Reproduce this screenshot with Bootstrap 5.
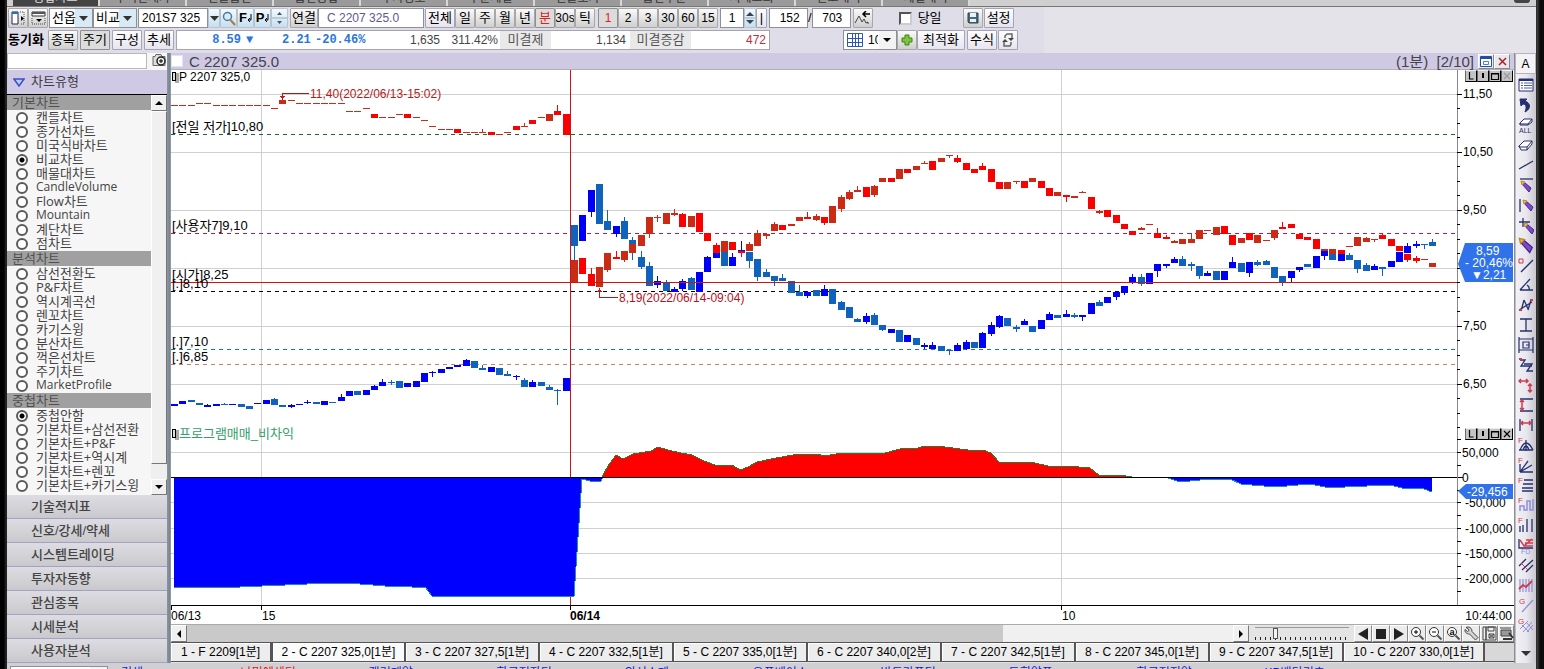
<!DOCTYPE html>
<html lang="ko">
<head>
<meta charset="utf-8">
<meta name="viewport" content="width=device-width, initial-scale=1">
<title>C 2207 325.0 차트</title>
<link rel="stylesheet" href="https://cdn.jsdelivr.net/npm/bootstrap@5.3.0/dist/css/bootstrap.min.css">
<style>
:root{--ui:"Liberation Sans","Noto Sans CJK KR",sans-serif;--lav:#cfc9e4;--line:#a9a9b2}
body{font-family:var(--ui);font-size:13px;line-height:14px;color:#000;background:#151515;overflow-x:hidden}
button,input,select{font-family:inherit}
.frame{padding:0 8px 0 7px;background:linear-gradient(90deg,#000 4px,#2a2a2a 6px,#1a1a1a 7px,#1a1a1a calc(100% - 8px),#444 calc(100% - 7px),#0c0c0c calc(100% - 4px))}
.desk{background:#e1e0e8;min-width:0}
/* window tabs */
.wintabs{height:7px;overflow:hidden;background:#cfcfcf;border-bottom:1px solid #77776f;padding-left:6px}
.wintabs a{width:87px;height:6px;border-right:2px solid #d8d8d8;background:#9a9a9a;color:#333;font-size:12px;line-height:12px;padding-bottom:2px;text-decoration:none;align-items:flex-end;justify-content:center;overflow:hidden}
.wintabs a.on{background:#444;color:#ddd}
.pill{width:16px;height:3px;background:#444;border-radius:0 0 3px 3px;margin-right:6px}
/* toolbar */
.tools{background:linear-gradient(90deg,#dfdee8 1036px,#e4e3ea 1038px);height:46px;padding:1px 1px 2px}
.trow{height:20px;margin-bottom:2px}
.tb{padding:0;height:20px;font-size:13px;line-height:18px;border:1px solid #a5a4b4;border-radius:1px;background:linear-gradient(#fdfdfe,#e6e5ef);color:#000;overflow:hidden;display:flex;align-items:center;justify-content:center;flex:none;white-space:nowrap}
.tb.num{font-size:12px}
.tb.gray{background:linear-gradient(#fafafa,#cfcfcf);border-color:#a8a8a8}
.tb.pressed{background:#dcdcdc;border-color:#8f8f8f}
.tb.blue{background:linear-gradient(#f4f9fd,#c6dff0);border-color:#b4c4d2}
.tb.hot{color:#e02020}
.w11{width:11px}.w12{width:12px}.w17{width:17px}.w20{width:20px}.w28{width:28px}.w30{width:30px}.w48{width:48px}
.fld{height:20px;padding:0 3px;font-size:12px;line-height:18px;border:1px solid #8f8f98;border-radius:0;background-color:#fff;color:#000;flex:none}
.fld:focus{box-shadow:none}
.sel{padding:0 0 0 2px;font-size:13px;background-position:right 0 center;background-size:17px 18px;background-image:url("data:image/svg+xml,%3Csvg xmlns='http://www.w3.org/2000/svg' viewBox='0 0 17 18'%3E%3Cpath fill='%23d8eaf6' d='M0 0h17v18H0z'/%3E%3Cpath fill='%23333' d='M4 7h9l-4.500 5z'/%3E%3C/svg%3E")}
.sel.plain{background-image:url("data:image/svg+xml,%3Csvg xmlns='http://www.w3.org/2000/svg' viewBox='0 0 17 18'%3E%3Cpath fill='%23f3f3f3' d='M0 0h17v18H0z'/%3E%3Cpath fill='%23000' d='M4 7h8l-4 4z'/%3E%3C/svg%3E")}
.sel.grid-sel{width:54px;padding:0 18px 0 24px;text-overflow:clip;font-size:12px}
.c44{width:44px}.c70{width:70px}.c106{width:106px}.c24{width:24px}.c39{width:39px}
.gp{gap:2px}
.sync{width:40px;font-weight:700;font-size:13px;line-height:20px;white-space:nowrap}
.quote{height:20px;width:594px;border:1px solid #a5a5ad;background:#fff;color:#444;font-size:12px;line-height:18px;margin-left:2px;flex:none}
.quote b{color:#2a76dd;font-family:"Liberation Mono",monospace;font-size:12px;white-space:pre}
.quote .lbl{background:#e9e9e9;color:#555;font-size:13px;text-align:center}
.form-check-input.box13[type=checkbox]{width:13px;height:13px;margin:0;border:2px solid #666;border-color:#555 #ccc #ccc #555;border-radius:0;background-color:#fff;flex:none}
/* side column */
.side{width:160px;flex:none;background:#f6f6f6}
.search{height:17px}
.search .fld{height:16px;width:140px;border-color:#b8b8b8}
.bar{height:24px;background:var(--lav);color:#3c3c44;font-size:13px;line-height:24px;padding:0 0 0 6px;border:0;text-align:left;width:100%}
.listbox{height:401px;border-top:1px solid #000;overflow:hidden}
.grp{height:15px;background:#a0a0a0;color:#505050;font-size:13px;line-height:15px;padding-left:5px;margin:0;width:100%}
.opts{margin:0;padding:0 0 1px;border:0;font-family:"Open Sans","Noto Sans CJK KR",sans-serif}
.opt{height:14px;padding-left:9px;color:#444;font-size:13px;line-height:14px;gap:8px;white-space:nowrap}
.opt.latin{font-size:12px}
.opt input{width:12px;height:12px;margin:2px 0 0;border:2px solid #5a5a5a;background:#fff;flex:none}
.opt input:checked{background:radial-gradient(circle,#000 2px,#fff 3px);border-color:#5a5a5a}
.vsb{width:16px;flex:none;background:#efefef}
.cap{width:16px;height:16px;padding:0;border:1px solid;border-color:#fff #777 #777 #fff;background:#f0f0f0;display:flex;align-items:center;justify-content:center;flex:none;border-radius:0}
.vthumb{height:353px;border:1px solid;border-color:#fff #777 #777 #fff;background:#f0f0f0}
.acc .list-group-item{height:24px;padding:0 0 0 24px;border:0;border-bottom:1px solid #a3a1c4;border-radius:0;background:linear-gradient(#dcdce2,#c9c9cd);color:#444;font-size:13px;line-height:22px;font-weight:500;text-align:left}
.gut{width:4px;flex:none;background:linear-gradient(90deg,#8b969f,#76838f 75%,#aab2b8)}
/* chart window */
.cap-title{height:17px;background:var(--lav);border-bottom:1px solid #b0aeb8;color:#44434c;font-size:15px;line-height:17px}
.cap-title .form-check-input[type=checkbox]{width:12px;height:12px;border:1px solid #e4e4ec;border-radius:0;margin:0 6px 0 0}
.wb{width:16px;height:15px;padding:0;border:1px solid;border-color:#fff #888 #888 #fff;background:#e9e8ee;display:flex;align-items:center;justify-content:center}
.canvas{position:relative;height:554px;background:#fff}
.canvas svg.plot{display:block;width:100%;height:554px}
.plot text{font-family:var(--ui);font-size:12px}
.plot text.ko{font-size:13px}
.mini{position:absolute;right:1px;z-index:2}
.mini button{width:12px;height:12px;padding:0;border:1px solid;border-color:#eee #000 #000 #666;background:#c4c4c4;display:flex}
.m1{top:0}.m2{top:358px}
.hsb{height:18px;background:#e4e4e4;border-top:1px solid #aaa}
.hthumb{background:#c9c9c9;width:78%}
.htrack{background:#f0f0f0}
.hsb .cap{height:17px}
.range{width:94px;height:16px;appearance:none;background:linear-gradient(#999,#999) 0 2px/100% 1px no-repeat,repeating-linear-gradient(90deg,#222 0 1px,transparent 1px 5px) 0 12px/100% 3px no-repeat;margin:0 5px 0 6px}
.range::-webkit-slider-thumb{appearance:none;width:5px;height:11px;background:#f4f4f4;border:1px solid #555}
.hb{width:18px;height:17px;padding:0;border:1px solid;border-color:#fff #888 #888 #fff;background:#ececec;display:flex;align-items:center;justify-content:center;flex:none;border-radius:0}
.sheets{height:20px;background:#d8d8d8;border-top:1px solid #555;border-bottom:1px solid #555;flex-wrap:nowrap;overflow:hidden}
.sheets .nav-link{width:134px;height:18px;padding:0;border:0;border-right:2px solid #555;border-radius:0;background:#ededed;color:#000;font-size:12px;line-height:18px;text-align:center;flex:none;white-space:nowrap;box-shadow:inset 1px 1px #fff}
.sheets .nav-link.first{width:101px}
.sheets .nav-link.last{width:141px}
.sheets .nav-link.active{background:#fafafa;border-left:1px solid #555}
/* drawing tools */
.draw{width:22px;flex:none;background:linear-gradient(90deg,#8d8d93 1px,#f1f0f4 2px,#e9e8ee 12px,#c9c6ce);padding-left:1px}
.draw button{width:21px;height:20px;padding:0;border:0;background:none;display:flex;align-items:center;justify-content:center}
.draw .abtn{height:21px;background:#f3f2f5;border:1px solid #b5b5bb;font-size:12px;color:#000;margin-bottom:1px}
.ticker{height:7px;overflow:hidden;background:#d0d0d3;font-size:12px;line-height:12px;padding-left:3px}
.ticker select{width:98px;height:20px;margin-top:3px;padding:0 0 0 10px;line-height:12px;align-self:flex-start}
.ticker a{width:128px;flex:none;padding-top:4px;text-decoration:none;color:#1414d8;line-height:12px;white-space:nowrap}
.ticker a.up{color:#e01414}
.ticker a.key{width:125px;padding-left:13px}
svg{flex:none}
</style>
</head>
<body>
<div class="frame">
<div class="desk">
  <nav class="wintabs d-flex" id="wintabs"></nav>

  <div class="tools">
    <div class="trow d-flex align-items-center">
      <button class="btn tb gray w20" aria-label="왼쪽 패널"><svg width="15" height="14"><path d="M1 1h6v12H1z" fill="#fff" stroke="#225"/><path d="M1 2h6" stroke="#2a6fb0" stroke-width="2"/><path d="M9 1h4v12H9" fill="none" stroke="#444" stroke-dasharray="1 1"/><path d="M10 5l3 2.500-3 2.500z"/></svg></button>
      <button class="btn tb gray w20" aria-label="위쪽 패널"><svg width="15" height="14"><path d="M1 1h13v4H1z" fill="#fff" stroke="#333"/><path d="M1 2h13" stroke="#555" stroke-width="2"/><path d="M1 7v6h13V7" fill="none" stroke="#444" stroke-dasharray="1 1"/><path d="M5 8h6l-3 3z"/></svg></button>
      <select class="form-select fld sel c44" style="margin-left:1px" aria-label="종목군"><option>선옵</option></select>
      <select class="form-select fld sel c44" aria-label="방식"><option>비교</option></select>
      <input class="form-control fld c70" style="margin-left:1px" value="201S7 325" aria-label="종목코드">
      <button class="btn tb blue w12" aria-label="목록"><svg width="9" height="5"><path d="M0 0h9L4.500 5z" fill="#333"/></svg></button>
      <button class="btn tb blue w17" aria-label="찾기"><svg width="14" height="15"><circle cx="5.500" cy="5.500" r="4" fill="#d4ecfa" stroke="#4c7a98" stroke-width="1.500"/><path d="M8.500 9l4.500 5" stroke="#b07a38" stroke-width="2"/></svg></button>
      <button class="btn tb blue w17"><b>F</b><svg width="5" height="9"><path d="M4 0v6H1m2-2L1 6l2 2" fill="none" stroke="#000"/></svg></button>
      <button class="btn tb blue w17"><b>P</b><svg width="5" height="9"><path d="M4 0v6H1m2-2L1 6l2 2" fill="none" stroke="#000"/></svg></button>
      <button class="btn tb blue w17" aria-label="이전 다음"><svg width="15" height="18"><path d="M0 9h15" stroke="#9ab"/><path d="M5 6h5L7.500 3zM5 12h5l-2.500 3z" fill="#456"/></svg></button>
      <button class="btn tb gray w28" style="margin-left:2px">연결</button>
      <input class="form-control fld c106" style="padding-left:8px;color:#62568f" value="C 2207 325.0" aria-label="종목명">
      <button class="btn tb w30" style="margin-left:1px">전체</button>
      <button class="btn tb gray w20">일</button><button class="btn tb gray w20">주</button><button class="btn tb gray w20">월</button><button class="btn tb gray w20">년</button><button class="btn tb gray w20 pressed hot">분</button><button class="btn tb gray w20 num">30s</button><button class="btn tb gray w20">틱</button>
      <div class="d-flex" style="margin-left:3px"><button class="btn tb num gray w20 pressed hot">1</button><button class="btn tb num gray w20">2</button><button class="btn tb num gray w20">3</button><button class="btn tb num gray w20">30</button><button class="btn tb num gray w20">60</button><button class="btn tb num gray w20">15</button></div>
      <input class="form-control fld c24 text-center" style="margin-left:2px" value="1" aria-label="주기">
      <button class="btn tb blue w12" aria-label="증감"><svg width="10" height="18"><path d="M0 9h10" stroke="#9ab"/><path d="M1 7h8L5 3zM1 11h8l-4 4z" fill="#345"/></svg></button>
      <button class="btn tb w11">|</button>
      <input class="form-control fld c39 text-end pe-1" style="margin-left:2px" value="152 " aria-label="표시 봉수"><span>/</span><input class="form-control fld c39 text-end pe-1" value="703 " aria-label="전체 봉수">
      <button class="btn tb gray w20" style="margin-left:2px" aria-label="되돌리기"><svg width="17" height="14"><path d="M1 12l4-7 3 6 2-3 2 4 2-1v2" fill="none" stroke="#444"/><path d="M16 3H9m3-3L9 3l3 3" fill="none" stroke="#000" stroke-width="1.500"/></svg></button>
      <input class="form-check-input box13" style="margin-left:26px" type="checkbox" id="today"><label for="today" style="width:51px;padding-left:6px">당일</label>
      <button class="btn tb gray w20" aria-label="저장"><svg width="12" height="12"><path d="M1 1h10v10H2l-1-1z" fill="#456a84" stroke="#344"/><path d="M3 1h6v4H3zM3 7h6v3H3z" fill="#e8f2f8"/></svg></button>
      <button class="btn tb w30" style="margin-left:1px">설정</button>
    </div>
    <div class="trow d-flex align-items-center">
      <span class="sync">동기화</span>
      <div class="d-flex gp"><button class="btn tb w30 gray">종목</button><button class="btn tb w30 pressed">주기</button><button class="btn tb w30">구성</button><button class="btn tb w30">추세</button></div>
      <div class="quote d-flex">
        <b class="text-end" style="width:64px">8.59</b><b style="width:41px;padding-left:5px">▼</b><b style="width:33px">2.21</b><b>-20.46%</b>
        <span class="text-end ms-auto" style="width:70px">1,635</span><span class="text-end" style="width:60px;padding-right:2px">311.42%</span>
        <span class="lbl" style="width:51px">미결제</span><span class="text-end pe-1" style="width:79px">1,134</span>
        <span class="lbl" style="width:61px">미결증감</span><span class="text-end" style="width:78px;padding-right:3px;color:#c22c38">472</span>
      </div>
      <div class="d-flex" style="margin-left:73px">
        <select class="form-select fld sel plain grid-sel" aria-label="격자"><option>10</option></select>
        <svg width="16" height="14" viewBox="0 0 16 14" style="margin:3px 0 0 -50px"><path d="M.5.5h15v13H.5zM5.500 0v14M8.500 0v14M11.500 0v14M0 5.500h16M0 9.500h16" fill="none" stroke="#2c55b8"/></svg>
        <button class="btn tb gray w20" style="margin-left:34px" aria-label="추가"><svg width="12" height="12"><path d="M4 1h4v3h3v4H8v3H4V8H1V4h3z" fill="#7ec242" stroke="#3b8314"/></svg></button>
        <button class="btn tb w48">최적화</button><button class="btn tb w30" style="margin-left:2px">수식</button>
        <button class="btn tb w20" style="margin-left:1px" aria-label="새로고침"><svg width="14" height="14"><path d="M4 5V3l2-2h5v4M10 9v2l-1 2H3V9" fill="none" stroke="#666" stroke-width="1.500"/><path d="M7 5h6l-3 3zM1 9h6L4 6z" fill="#444"/></svg></button>
      </div>
    </div>
  </div>

  <div class="d-flex">
    <aside class="side">
      <div class="search d-flex"><input class="form-control fld" aria-label="차트 검색"><button class="btn p-0 border-0 d-flex ms-1" aria-label="검색"><svg width="16" height="15"><path d="M2 3.500h2l1-2h5l1 2h3v9H2z" fill="#ddd" stroke="#666"/><circle cx="10" cy="8" r="4" fill="#eee" stroke="#222" stroke-width="1.500"/><path d="M8 8h4M10 6v4" stroke="#000"/></svg></button></div>
      <button class="bar d-flex align-items-center"><svg width="12" height="9"><path d="M1 1h10L6 8z" fill="#b9ccfa" stroke="#3b50c8" stroke-width="1.500"/></svg><span style="margin-left:6px">차트유형</span></button>
      <div class="listbox d-flex">
        <div class="flex-grow-1" id="options"></div>
        <div class="vsb d-flex flex-column">
          <button class="cap" aria-label="위로"><svg width="8" height="4"><path d="M0 4h8L4 0z"/></svg></button>
          <div class="vthumb"></div>
          <button class="cap mt-auto" aria-label="아래로"><svg width="8" height="4"><path d="M0 0h8L4 4z"/></svg></button>
        </div>
      </div>
      <div class="list-group acc">
        <button class="list-group-item">기술적지표</button><button class="list-group-item">신호/강세/약세</button><button class="list-group-item">시스템트레이딩</button><button class="list-group-item">투자자동향</button><button class="list-group-item">관심종목</button><button class="list-group-item">시세분석</button><button class="list-group-item">사용자분석</button>
      </div>
    </aside>
    <div class="gut"></div>

    <main class="flex-grow-1" style="min-width:0">
      <div class="cap-title d-flex align-items-center">
        <input type="checkbox" class="form-check-input" aria-label="차트 선택"><span>C 2207 325.0</span>
        <span class="ms-auto me-1">(1분) &nbsp;[2/10]</span>
        <button class="wb" aria-label="최대화"><svg width="12" height="11"><path d="M.5.5h11v10H.5z" fill="#fff" stroke="#1c4fa8"/><path d="M1 2h10" stroke="#1c4fa8" stroke-width="2"/><path d="M3.500 5.500h5v3h-5z" fill="none" stroke="#4d7cc8"/></svg></button>
        <button class="wb me-1" aria-label="닫기"><svg width="9" height="9"><path d="M1 1l7 7M8 1L1 8" stroke="#a82028" stroke-width="1.500"/></svg></button>
      </div>
      <div class="canvas">
        <svg class="plot" id="plot" role="img" aria-label="비교차트"></svg>
        <div class="mini m1 d-flex"></div>
        <div class="mini m2 d-flex"></div>
      </div>
      <div class="hsb d-flex">
        <button class="cap" aria-label="왼쪽"><svg width="4" height="8"><path d="M4 0v8L0 4z"/></svg></button>
        <div class="flex-grow-1 d-flex htrack"><div class="hthumb"></div></div>
        <button class="cap" aria-label="오른쪽"><svg width="4" height="8"><path d="M0 0v8l4-4z"/></svg></button>
        <input type="range" class="range" value="20" aria-label="간격">
        <button class="hb" aria-label="뒤로"><svg width="10" height="12"><path d="M10 0v12L0 6z" fill="#222"/></svg></button>
        <button class="hb" aria-label="정지"><svg width="10" height="10"><path d="M0 0h10v10H0z" fill="#222"/></svg></button>
        <button class="hb" aria-label="앞으로"><svg width="10" height="12"><path d="M0 0v12l10-6z" fill="#222"/></svg></button>
        <button class="hb" aria-label="확대"><svg width="15" height="15"><circle cx="6" cy="6" r="4.500" fill="#fff" stroke="#333"/><path d="M4 6h4M6 4v4" stroke="#000"/><path d="M9.500 9.500l4 4" stroke="#555" stroke-width="2"/></svg></button>
        <button class="hb" aria-label="축소"><svg width="15" height="15"><circle cx="6" cy="6" r="4.500" fill="#fff" stroke="#333"/><path d="M4 6h4" stroke="#000"/><path d="M9.500 9.500l4 4" stroke="#555" stroke-width="2"/></svg></button>
        <button class="hb" aria-label="전체 보기"><svg width="15" height="15"><circle cx="6" cy="6" r="4.500" fill="#fff" stroke="#333"/><text x="3.500" y="9" font-size="9" font-weight="700">a</text><path d="M9.500 9.500l4 4" stroke="#555" stroke-width="2"/></svg></button>
        <button class="hb" aria-label="환경설정"><svg width="15" height="15"><path d="M2 1.500C5 0 8 2 8 5.500l6 6-2.500 2.500-6-6C2.500 8 .5 6 1 3.500L3.500 5.500 5 4.500 4.500 3z" fill="#d4d4d4" stroke="#444"/></svg></button>
        <button class="hb" aria-label="저장"><svg width="15" height="15"><path d="M1 1h3v13H1zM4 1h10v13H4z" fill="#eee" stroke="#444"/><path d="M6 1h6v4H6zM7 8h5v4H7zM7 8l5 4M12 8l-5 4" fill="none" stroke="#444"/></svg></button>
        <button class="hb" style="width:16px" aria-label="인쇄"><svg width="15" height="15"><path d="M1 2h11M2 4h10v6H2z" fill="#999" stroke="#444"/><path d="M4 13h9M10 7l4 5" stroke="#333" stroke-width="2"/></svg></button>
      </div>
      <nav class="nav sheets">
        <a class="nav-link first" href="#">1 - F 2209[1분]</a><a class="nav-link active" href="#">2 - C 2207 325,0[1분]</a><a class="nav-link" href="#">3 - C 2207 327,5[1분]</a><a class="nav-link" href="#">4 - C 2207 332,5[1분]</a><a class="nav-link" href="#">5 - C 2207 335,0[1분]</a><a class="nav-link" href="#">6 - C 2207 340,0[2분]</a><a class="nav-link" href="#">7 - C 2207 342,5[1분]</a><a class="nav-link" href="#">8 - C 2207 345,0[1분]</a><a class="nav-link" href="#">9 - C 2207 347,5[1분]</a><a class="nav-link last" href="#">10 - C 2207 330,0[1분]</a>
      </nav>
    </main>

    <aside class="draw d-flex flex-column" id="draw"></aside>
  </div>

  <div class="ticker d-flex">
    <select class="form-select fld sel plain" aria-label="관심그룹"><option>한국투증</option></select>
    <a class="key" href="#">검색</a><a class="up" href="#">▪ 나믹에셋티</a><a href="#">▪ 갤러제약</a><a href="#">▪ 한국전자티</a><a href="#">▪ 외선스제</a><a href="#">▪ 오픈베이스</a><a href="#">▪ 반도라푸틱</a><a href="#">▪ 도희약품</a><a href="#">▪ 한국전지약</a><a href="#">▪ KB배당리츠</a>
  </div>
</div>
</div>

<script>
/* window tabs */
const tabNames=['종합차트','주식현재가','선물옵션','옵션종합','투자정보','주문체결','선물호가','옵션주문','시세조회','잔고내역','체결내역'];
document.getElementById('wintabs').innerHTML=tabNames.map((t,i)=>`<a href="#" class="d-flex ${i?'':'on'}">${t}</a>`).join('')+'<span class="pill ms-auto"></span>';

/* chart type list */
const groups=[['기본차트','캔들차트,종가선차트,미국식바차트,비교차트,매물대차트,CandleVolume,Flow차트,Mountain,계단차트,점차트',3],
['분석차트','삼선전환도,P&F차트,역시계곡선,렌꼬차트,카기스윙,분산차트,꺽은선차트,주기차트,MarketProfile',-1],
['중첩차트','중첩안함,기본차트+삼선전환,기본차트+P&F,기본차트+역시계,기본차트+렌꼬,기본차트+카기스윙',0]];
document.getElementById('options').innerHTML=groups.map((g,k)=>`<fieldset class="opts"><legend class="grp">${g[0]}</legend>`+
 g[1].split(',').map((n,i)=>`<label class="opt d-flex align-items-start ${/^[A-Za-z]+$/.test(n)?'latin':''}"><input class="form-check-input" type="radio" name="${k<2?'type':'overlay'}" ${i===g[2]?'checked':''}><span>${n.replace('&','&amp;')}</span></label>`).join('')+'</fieldset>').join('');

/* pane buttons */
document.querySelectorAll('.mini').forEach((m,k)=>{
 m.innerHTML=['M3.500 1v7h4','M5 2v5','M1.500 2.500h7v6h-7zM1 3h8','M2 2l6 6M8 2l-6 6'].map((d,i)=>`<button aria-label="창 ${i+1}"><svg width="10" height="10"><path d="${d}" fill="none" stroke="${i===3&&!k?'#999':'#000'}" stroke-width="${i===1?2:1.2}"/></svg></button>`).join('')});

/* drawing tool icons: navy, red and lilac strokes */
const N='#26306e',R='#d23a4c',L='#8d8fd8';
const p=(d,c=N,w=1.3,f='none')=>`<path d="${d}" stroke="${c}" stroke-width="${w}" fill="${f}"/>`;
const t=(s,x,y,c=R,z=8)=>`<text x="${x}" y="${y}" fill="${c}" font-size="${z}" font-family="Liberation Sans">${s}</text>`;
const pencil=(x,y)=>`<g transform="translate(${x} ${y})">`+p('M1 3l2-2 7 6-2 4z','#4b2390',1,'#7c4cc8')+p('M0 0l4 1-3 3z','#b88a20',1,'#e8c050')+'</g>';
const icons=[
 p('M1 2h14v12H1z',N,1,'#fff')+p('M1 3h14',N,2)+p('M3 6h2M6 6h8M3 8.500h2M6 8.500h8M3 11h2M6 11h8','#4c5fb8',1),
 p('M2 2l1 7 2-2c3 0 4 3 2 8 6-3 6-9 0-11l2-2z',N,1,N),
 p('M2 6l4-4h8l-4 5H2zM2 6v2h8V7M14 2v3l-4 3',N,1,'#fff')+t('ALL',1,16,N,7),
 p('M1 9l5-5h8l-5 6H1zM1 9l2 4h6v-3M14 4v3l-5 6',N,1,'#fff'),
 p('M1 12L15 4'),
 p('M2 2h13')+pencil(3,4),
 p('M2 2v13')+pencil(5,3),
 p('M1 5h11M5 1v9')+pencil(6,6),
 `<g transform="scale(1.300)">${pencil(1,1)}</g>`,
 p('M1 2h4v4H1z',R,1)+p('M3 15L15 3'),
 p('M2 13h13M2 13L12 2M9 8q3 2 2 5'),
 p('M3 14L6 3M6 3l4 9M10 13l3-10M1 13l13-8')+p('M1 13h3M12 3h3',R,2),
 p('M2 2h12M8 2v12M2 14h12'),
 p('M1 0v16M15 0v16M1 2h14v11H1zM5 5h6v6H5zM8 8h3',N,1.2),
 p('M2 3h5L3 9h5M6 7h8l-5 7h6M3 9l11 0')+p('M1 2h3',R,2),
 p('M1 4h9M3 2L1 4l2 2M8 2l2 2-2 2M12 7v8M10 9l2-2 2 2M10 13l2 2 2-2',R,1.5),
 p('M2 2h13M2 14h13')+p('M4 3v10M2 5l2-2 2 2M2 11l2 2 2-2',R,1.5),
 p('M2 2v12M14 2v12')+p('M3 6h10M5 4L3 6l2 2M11 4l2 2-2 2',R,1.5),
 t('F',0,6)+p('M2 13q6-14 13 0M5 13q3-8 6 0M8 3v11M1 13h14'),
 t('F',0,6)+p('M2 15L10 4M2 15L14 8M2 15h13M2 15V7'),
 t('F',0,6)+p('M6 3h9M5 7h10M4 11h11M4 14h11'),
 t('F',0,6)+p('M2 14V9h4v4h3V4h3v9h3V2',L,1.5),
 t('F',0,6)+p('M2 9v6M5 8v7M9 2v13M14 2v13'),
 p('M1 2v9h14')+p('M2 3l4 6 8-7M6 9h9M7 6h8M8 3h7',R,1.4)+t('FD',3,17,L,7),
 p('M1 9L8 2M4 13L15 3M8 15l7-7')+p('M3 6l7 7',R,1),
 p('M2 2v13M5 2v13M8 2v13M11 2v13M14 2v13',L,1.2)+p('M1 12l4-4 3 2 6-6',R,1.8),
 t('G',1,7)+p('M4 15L15 3',L),
 t('G',0,7)+p('M2 12l8-8M5 15l9-10M9 15l6-7M4 8l7 7M8 5l7 8',L,1)];
document.getElementById('draw').innerHTML='<button class="abtn">A</button>'+icons.map((s,i)=>`<button aria-label="그리기 도구 ${i+1}"><svg width="16" height="17" viewBox="0 0 16 17">${s}</svg></button>`).join('')+'<button class="mt-auto" aria-label="더 보기"><svg width="10" height="5"><path d="M0 0h10L5 5z" fill="#333"/></svg></button>';

/* candles: body top, body bottom, shade (b bright, d dark), optional wick top, wick bottom */
const put=`105 106 d/105 106 d/105 106 d/103 104 d/103 104 d/105 106 d/105 106 d/105 106 d/105 106 d/105 106 d/105 106 d/105 106 d/108 109 d/100 104 d/100 101 d/103 104 d/103 104 d/103 104 d/103 104 d/103 104 d/103 104 d/111 112 d/111 112 d/108 109 d/114 118 b/117 118 d/117 118 d/114 115 d/114 118 b/117 118 d/120 121 d/126 127 d/129 130 d/129 130 d/129 133 b/132 133 d/132 133 d/132 133 d 129 133/132 135 b/134 135 d/132 133 d/126 130 b/126 127 d 123 127/120 124 b/117 118 d/114 121 d/111 115 b 105 115/114 135 b/`+
`260 283 d/258 274 b/274 286 b 268 286/267 287 d/253 270 d 253 272/257 259 b 251 259/251 260 d 251 262/244 253 d/235 246 d/217 234 d 217 238/217 218 d 215 222/213 224 d/213 215 d 209 216/214 227 b 213 227/216 227 d/213 232 b/233 241 b/245 253 b 243 253/241 252 d/242 250 b/251 253 b 251 257/244 251 d 242 251/233 246 d 230 246/234 236 d 233 239/224 231 d 222 231/225 230 b/224 226 d/217 221 d/217 219 b 212 219/216 220 d 214 221/217 223 b 217 225/206 223 d/197 209 d 195 212/192 199 d 190 200/190 192 d 186 192/187 197 b/186 195 d 185 197/178 182 d/178 182 b/169 179 d/169 173 b/166 170 d/163 164 d 161 164/161 170 b/158 162 d/155 156 d 155 158/158 162 b 155 163/163 170 b/169 173 b/166 170 b 163 170/169 182 b/182 189 b/182 189 d/181 182 d 181 184/181 188 b/178 182 d/181 188 b/188 196 b/192 196 d/195 197 b 195 202/196 198 d/192 193 d 191 193/197 209 b/211 213 d 210 214/210 217 b/215 223 b/224 229 b/231 235 b/228 230 d 227 230/224 225 d/233 238 b 228 238/237 239 b 235 239/241 243 d 240 243/239 244 d/239 243 d 233 243/230 239 d/230 231 d/227 235 d/226 234 b/235 245 b/238 243 d/233 240 b/235 243 d/240 241 d/230 238 d 230 240/227 229 b 222 229/224 228 b/234 239 b/237 240 b/239 249 b/249 251 d/249 254 d/250 254 b/246 247 d/237 246 d/238 242 d 237 242/239 240 d 239 242/235 239 b 233 239/239 246 b/246 251 b/254 260 b 254 262/258 261 b 256 263/259 260 d/263 267 d`;
const call=`404 406 b/401 404 b/400 402 d/403 405 d/405 407 b 404 407/404 406 b/404 405 d 403 405/404 405 b/404 407 d/406 409 d/403 404 b/400 404 b/399 405 d 398 405/405 407 d/405 407 b 404 408/404 405 b/402 403 b 400 404/402 404 d/401 405 b/402 403 d/397 401 b 394 401/391 396 b/391 395 d/390 395 b/386 390 b 385 390/382 386 b 379 386/382 383 d 380 385/381 388 d/383 387 b/381 387 b/373 382 b/372 373 b 371 377/369 373 b/367 369 b/365 367 b/360 366 b 359 366/361 368 d/368 370 d 365 370/367 372 b/368 375 d/374 376 d 371 376/376 377 b 375 380/380 387 d 378 387/382 387 b 380 387/382 386 d/387 390 d 385 390/390 391 d 389 405/378 391 b/`+
`225 246 d 225 260/215 241 b/190 212 b 190 217/184 224 d/221 230 d 210 230/226 234 b 226 237/221 239 d 217 239/240 247 d 237 260/257 267 d 251 269/266 286 d 262 286/281 285 b 276 288/283 291 d 280 291/289 292 b 287 292/281 289 b 279 291/278 290 d 277 290/272 292 b/257 272 b 256 272/253 258 b/252 266 d/257 266 b 253 266/250 251 b 241 254/252 261 d 252 268/259 277 d 259 281/272 277 d 269 277/276 281 d 276 286/278 281 d 274 281/281 293 d/292 296 d 285 296/292 296 b 291 298/290 296 d/289 296 b 285 296/289 304 d/302 310 d 301 310/307 318 d/319 322 d 318 322/316 322 b 313 324/315 325 d 313 325/325 330 d 325 331/329 333 b/330 342 d/335 342 b/338 345 d/345 347 b 343 349/345 349 b 342 349/346 351 d/350 351 d 350 355/345 351 b 343 351/342 349 b 340 350/342 348 d/333 348 b 332 348/325 334 b 322 336/316 327 b 315 328/318 326 d/327 329 d 325 332/321 325 b 319 325/326 332 d/320 329 b/314 320 b 312 320/315 318 d/314 317 b 310 317/315 317 d 313 318/315 317 b 315 321/303 314 b/302 306 d 300 306/297 303 b/292 297 b 292 300/286 293 b 286 295/277 282 b 274 284/277 284 d 274 286/273 284 b/264 271 b 264 277/264 266 b 264 268/259 263 b 257 263/259 266 d 256 266/264 266 d 262 271/266 276 d 266 279/273 276 b 271 276/271 280 d/271 280 b/262 268 b 257 268/263 272 d/262 273 b 262 277/262 265 d 260 266/261 265 d 260 265/267 278 d/276 283 d 276 286/271 278 b 271 282/267 270 b 267 272/264 267 d/256 268 b/251 256 b 251 260/254 260 d/254 261 b/255 260 d 253 260/260 269 d 260 273/265 271 d 263 271/266 270 b 264 270/267 269 d 267 276/261 267 b/252 262 b/246 253 b 243 253/244 246 b 241 248/244 245 d 244 249/242 246 d 239 246`;
const negA=[[174,587],[240,587],[262,586],[285,585],[330,583],[360,584],[385,586],[412,587],[425,587],[432,596],[574,596],[582,479],[590,481],[601,481],[603,477]];
const pos=[[602,477],[608,466],[616,455],[623,459],[633,454],[651,451],[658,447],[668,450],[681,453],[692,455],[704,461],[715,465],[732,465],[740,470],[748,467],[757,462],[776,458],[793,455],[805,454],[817,454],[824,456],[842,453],[850,454],[858,453],[874,454],[885,453],[900,449],[918,448],[925,446],[937,446],[953,448],[975,451],[983,450],[991,453],[999,462],[1010,463],[1016,462],[1035,463],[1048,466],[1067,466],[1090,468],[1100,476],[1120,475],[1132,477]];
const negB=[[1165,477],[1180,482],[1200,480],[1230,479],[1241,484],[1275,487],[1310,484],[1325,487],[1345,487],[1390,485],[1402,488],[1424,489],[1432,492]];

function render(){
 const svg=document.getElementById('plot'),W=svg.clientWidth,T=70,LX=171;
 const plotW=W-57,k=plotW/1286;
 const X=v=>Math.round((v-LX)*k),Y=v=>v-T;
 const hl=(y,c,dash,w=plotW)=>`<path d="M0 ${Y(y)+.5}H${w}" stroke="${c}" ${dash?'stroke-dasharray="4 4"':''}/>`;
 const tx=(x,y,s,c='#000',extra='')=>`<text x="${x}" y="${Y(y)}" fill="${c}" ${extra}>${s}</text>`;
 const vl=(x,c,y1=70,y2=605)=>`<path d="M${X(x)+.5} ${Y(y1)}V${Y(y2)}" stroke="${c}"/>`;
 let h='<g shape-rendering="crispEdges" fill="none">';
 [94,152,210,268,326,384,452,502,528,553,578].forEach(y=>h+=hl(y,'#d0d0d0'));
 h+=vl(261,'#d0d0d0')+vl(1061,'#d0d0d0');
 h+=hl(134,'#1d6a30',1)+hl(233,'#c01844',1)+hl(291,'#000',1)+hl(349,'#1c7c90',1)+hl(364,'#c08468',1);
 const area=(pts,f,s)=>{const l=pts.map(q=>X(q[0])+' '+Y(q[1])).join('L');return `<path d="M${X(pts[0][0])} ${Y(477)}L${l}L${X(pts[pts.length-1][0])} ${Y(477)}z" fill="${f}"/><path d="M${l}" stroke="${s}"/>`};
 h+=area(negA,'#00f','#1b8fb0')+area(pos,'#f00','#2c7a2c')+area(negB,'#00f','#1b8fb0')+vl(570,'#c81420',70,478);
 h+=`<path d="M${X(570)+.5} ${Y(597)}V${Y(605)}" stroke="#c81420"/>`;
 const candles=(src,cb,cd)=>{src.split('/').forEach((r,i)=>{const a=r.split(' '),x=X(174+i*8.333),c=a[2]==='b'?cb:cd,w=Math.max(3,Math.round(7*k));
  if(a[3])h+=`<path d="M${x+.5} ${Y(+a[3])}V${Y(+a[4])}" stroke="${c}"/>`;
  h+=`<rect x="${x-(w>>1)}" y="${Y(+a[0])}" width="${w}" height="${a[1]-a[0]}" fill="${c}"/>`})};
 candles(call,'#0000f8','#1063bd');candles(put,'#fa0000','#cb2a14');
 h+=hl(282,'#d01414');
 h+=hl(477,'#000',0,plotW+6)+hl(605,'#000',0,W);
 h+=`<path d="M${plotW+.5} 0V535" stroke="#888"/>`;
 for(let i=0;i<=23;i++)h+=`<path d="M${plotW} ${Math.floor(24+14.5*i)+.5}h${i%4?3:5}" stroke="#000"/>`;
 [439,452,465,490,502,515,528,541,553,566,578,591].forEach(y=>h+=`<path d="M${plotW} ${Y(y)+.5}h4" stroke="#000"/>`);
 [171,261,570,1061].forEach(x=>h+=vl(x,'#000',605,610));
 h+=`<path d="M${X(282)+.5} 30V23.500H${X(309)}M${X(599)+.5} 220v7.500H${X(618)}" stroke="#a81c1c"/><path d="M${X(282)-2} 26h5l-2.500 4zM${X(599)-2} 222h5l-2.500-4z" fill="#c01c1c"/>`;
 h+='</g>';
 [80,437].forEach(q=>h+=`<path d="M4 ${Y(q-7)}h4v10H4z" fill="#aaa"/><rect x="1.500" y="${Y(q)-7.5}" width="3" height="8" fill="#ddd" stroke="#000"/>`);
 h+=tx(8,81,'P 2207 325,0')+tx(X(310),98,'11,40(2022/06/13-15:02)','#b42018')+tx(X(619),302,'8,19(2022/06/14-09:04)','#b8101c');
 [[131,'[전일 저가]10,80'],[230,'[사용자7]9,10'],[279,'[시가]8,25'],[288,'[.]8,10'],[346,'[.]7,10'],[361,'[.]6,85']].forEach(q=>h+=tx(1,q[0],q[1],'#000','class="ko"'));
 h+=tx(8,438,'프로그램매매_비차익','#35a06c','class="ko"');
 ['11,50','10,50','9,50','','7,50','6,50'].forEach((s,i)=>{if(s)h+=tx(plotW+6,98+58*i,s)});
 h+=tx(plotW+5,457,'50,000')+tx(plotW+5,482,'0');
 [[507,'-50,000'],[533,'-100,000'],[558,'-150,000'],[583,'-200,000']].forEach(q=>h+=tx(plotW+8,q[0],q[1]));
 h+=`<path d="M${plotW+1} ${Y(264)}l7-21H${W-1}v39H${plotW+8}z" fill="#2f72ea"/><path d="M${plotW+1} ${Y(491)}l8-7H${W-1}v15H${plotW+9}z" fill="#2f72ea"/>`;
 h+=tx(plotW+19,255,'8,59','#fff')+tx(plotW+8,267,'- 20,46%','#fff')+tx(plotW+14,279,'▼2,21','#fff')+tx(plotW+10,496,'-29,456','#fff');
 h+=tx(0,620,'06/13')+tx(X(261)+1,620,'15')+tx(X(570),620,'06/14','#000','font-weight="700"')+tx(X(1061)+1,620,'10')+tx(W-2,620,'10:44:00','#000','text-anchor="end"');
 svg.innerHTML=h;
}
render();addEventListener('resize',render);
</script>
<script src="https://cdn.jsdelivr.net/npm/bootstrap@5.3.0/dist/js/bootstrap.bundle.min.js"></script>
</body>
</html>
